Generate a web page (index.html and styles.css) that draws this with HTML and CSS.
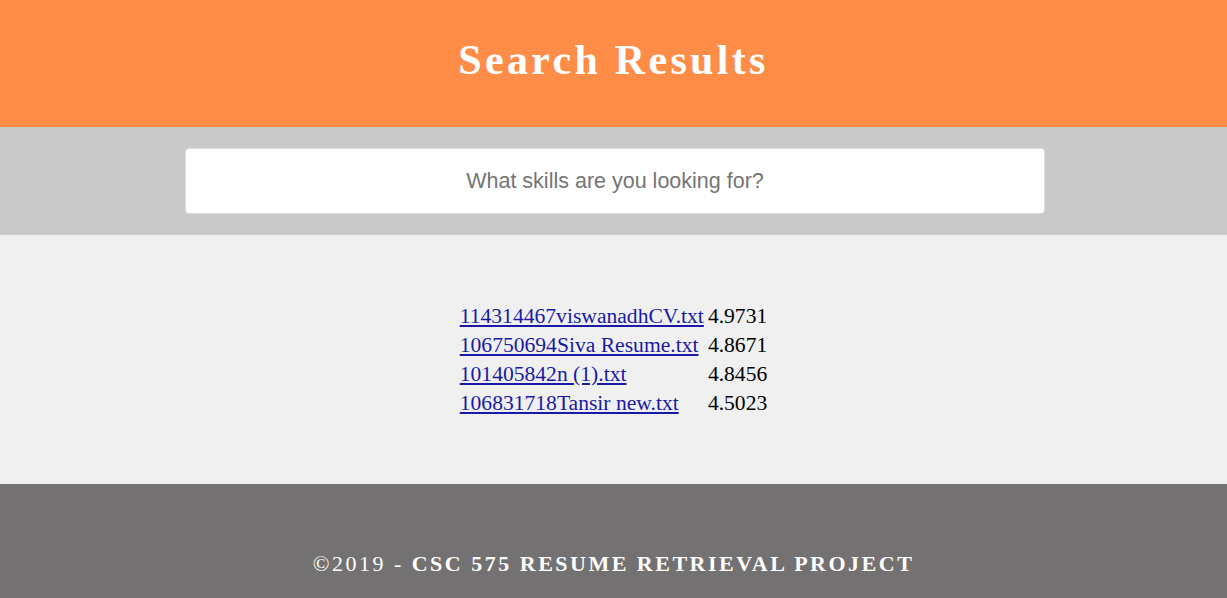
FILE: index.html
```html
<!DOCTYPE html>
<html>
<head>
<meta charset="utf-8">
<title>Search Results</title>
<link rel="stylesheet" href="styles.css">
</head>
<body>
<header class="top">
  <h1 class="title">Search Results</h1>
</header>
<section class="search">
  <input class="search-input" type="text" placeholder="What skills are you looking for?">
</section>
<main class="results">
  <table class="results-table">
    <tr><td><a href="#">114314467viswanadhCV.txt</a></td><td>4.9731</td></tr>
    <tr><td><a href="#">106750694Siva Resume.txt</a></td><td>4.8671</td></tr>
    <tr><td><a href="#">101405842n (1).txt</a></td><td>4.8456</td></tr>
    <tr><td><a href="#">106831718Tansir new.txt</a></td><td>4.5023</td></tr>
  </table>
</main>
<footer class="bottom">
  <p class="copy"><span class="year">©2019 -</span> CSC 575 RESUME RETRIEVAL PROJECT</p>
</footer>
</body>
</html>
```
FILE: styles.css
```css
html, body {
  margin: 0;
  padding: 0;
}
body {
  font-family: "Liberation Serif", "Times New Roman", serif;
  background: #f0f0f0;
}
.top {
  background: #ff8d47;
  height: 127px;
  display: flex;
  align-items: center;
  justify-content: center;
}
.title {
  margin: 0;
  color: #fff;
  font-size: 42px;
  font-weight: bold;
  letter-spacing: 3.3px;
  padding-bottom: 8px;
}
.search {
  background: #c9c9c9;
  padding: 21px 0 21px 3px;
  display: flex;
  justify-content: center;
}
.search-input {
  box-sizing: border-box;
  width: 860px;
  height: 66px;
  border: 1px solid #dedede;
  border-radius: 4px;
  background: #fff;
  font-family: "Liberation Sans", Arial, sans-serif;
  font-size: 21.5px;
  text-align: center;
  outline: none;
}
.search-input::placeholder {
  color: #757575;
}
.results {
  background: #f0f0f0;
  height: 249px;
  box-sizing: border-box;
  padding-top: 66px;
  display: flex;
  justify-content: center;
  align-items: flex-start;
}
.results-table {
  font-size: 21.6px;
  border-spacing: 2px;
  color: #000;
}
.results-table td {
  padding: 1px;
  line-height: 25px;
}
.results-table a {
  color: #1a1aa6;
}
.bottom {
  background: #737172;
  height: 114px;
  box-sizing: border-box;
  padding-top: 67px;
}
.copy {
  margin: 0;
  text-align: center;
  color: #fff;
  font-size: 22px;
  font-weight: bold;
  letter-spacing: 2.5px;
}
.year {
  font-weight: normal;
}
```
